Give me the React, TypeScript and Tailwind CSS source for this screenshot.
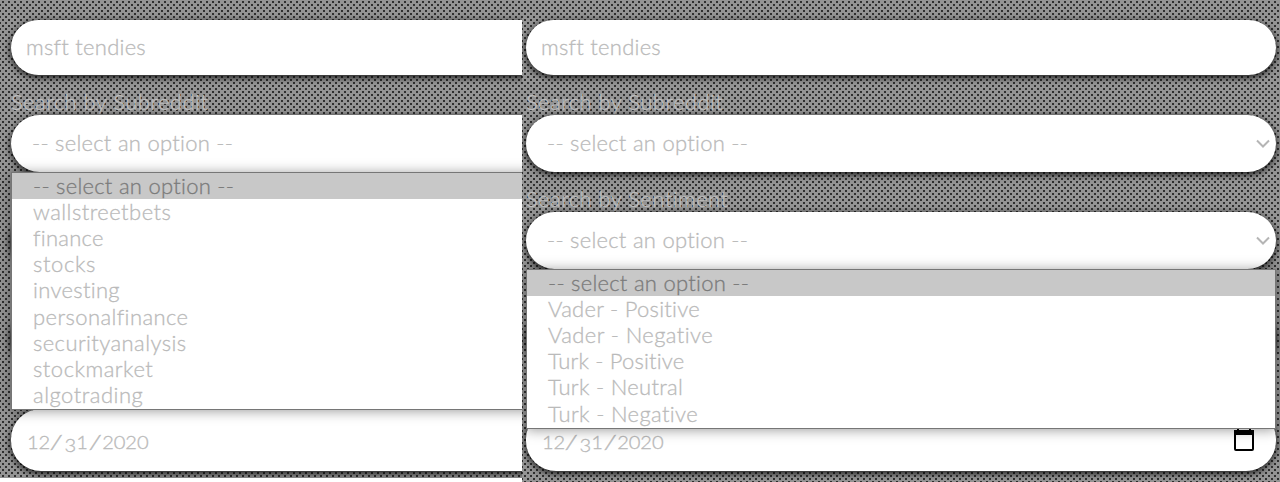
import React from "react";

type Option = { label: string; tracking: string };

const placeholder = "-- select an option --";

const subreddits: Option[] = [
  { label: "wallstreetbets", tracking: "tracking-[0.45px]" },
  { label: "finance", tracking: "tracking-[0.25px]" },
  { label: "stocks", tracking: "tracking-[0.6px]" },
  { label: "investing", tracking: "tracking-[0.3px]" },
  { label: "personalfinance", tracking: "tracking-[0.4px]" },
  { label: "securityanalysis", tracking: "tracking-[0.4px]" },
  { label: "stockmarket", tracking: "tracking-[0.5px]" },
  { label: "algotrading", tracking: "tracking-[0.5px]" },
];

const sentiments: Option[] = [
  { label: "Vader - Positive", tracking: "tracking-[0.27px]" },
  { label: "Vader - Negative", tracking: "tracking-[0.4px]" },
  { label: "Turk - Positive", tracking: "tracking-[0.17px]" },
  { label: "Turk - Neutral", tracking: "tracking-[0.3px]" },
  { label: "Turk - Negative", tracking: "tracking-[0.35px]" },
];

const field =
  "relative flex w-[750px] shrink-0 items-center rounded-[30px] bg-white text-[#bababa] shadow-[0_2px_6px_1px_rgba(0,0,0,0.75)]";

function Label({ text }: { text: string }) {
  return (
    <div className="h-10 shrink-0 pt-[13px] leading-7 tracking-[0.45px] text-[#bcbcbc]">{text}</div>
  );
}

function Select({ children }: { children?: React.ReactNode }) {
  return (
    <div className={`${field} h-[57px] pl-[21px]`}>
      <span className="pb-0.5 tracking-[0.26px]">{placeholder}</span>
      <svg className="absolute top-[24px] right-[6px]" width="14" height="10" fill="none" stroke="#b5b5b5" strokeWidth="2">
        <path d="M1 1.5 7 7.5 13 1.5" />
      </svg>
      {children}
    </div>
  );
}

function Menu({ options }: { options: Option[] }) {
  return (
    <div className="absolute top-[57px] left-0 z-10 w-[750px] border border-[#767676] bg-white pb-[0.6px] shadow-[0_1px_12px_rgba(0,0,0,0.4)]">
      <div className="flex h-[26.3px] items-center bg-[#c8c8c8] pb-px pl-[21px] tracking-[0.26px] text-[#7b7b7b]">
        {placeholder}
      </div>
      {options.map((o) => (
        <div key={o.label} className={`flex h-[26.2px] items-center pb-px pl-[21px] ${o.tracking}`}>
          {o.label}
        </div>
      ))}
    </div>
  );
}

function DateField() {
  return (
    <div className={`${field} h-[62px] pl-4`}>
      <span className="mt-1 inline-block origin-left scale-x-[1.15] text-[17.5px] tracking-[-0.1px]">
        12<span className="mx-[1px] inline-block scale-x-[1.35] text-[20px]">/</span>
        <span className="relative top-[3px] ml-0.5">3</span>1<span className="mx-[2px] inline-block scale-x-[1.35] text-[20px]">/</span>2020
      </span>
      <svg className="absolute top-[18px] right-[22px]" width="20" height="24" viewBox="0 0 20 24">
        <path d="M4 0v4M16 0v4" stroke="#000" strokeWidth="2" />
        <rect x="1" y="4" width="18" height="19" rx="1" fill="none" stroke="#000" strokeWidth="2" />
        <path d="M0 3h20v5H0z" />
      </svg>
    </div>
  );
}

function Form({ open }: { open: "subreddit" | "sentiment" }) {
  return (
    <>
      <div className={`${field} h-[55px] pl-[15px]`}>
        <span className="pb-0.5 tracking-[0.25px]">msft tendies</span>
      </div>
      <Label text="Search by Subreddit" />
      <Select>{open === "subreddit" && <Menu options={subreddits} />}</Select>
      {open === "sentiment" ? <Label text="Search by Sentiment" /> : <div className="h-10 shrink-0" />}
      {open === "sentiment" ? (
        <Select>
          <Menu options={sentiments} />
        </Select>
      ) : (
        <div className={`${field} h-[57px]`} />
      )}
      <div className="h-10 shrink-0" />
      <div className={`${field} h-[57px]`} />
      <div className="h-[43px] shrink-0" />
      <DateField />
    </>
  );
}

const dots =
  "bg-[#949494] bg-[radial-gradient(circle_at_center,#303030_0.75px,#30303000_1.45px),radial-gradient(circle_at_center,#303030_0.75px,#30303000_1.45px)] bg-size-[6px_6px] bg-position-[0px_-1px,3px_2px]";

export default function App() {
  return (
    <main className="flex h-[482px] w-[1280px] overflow-hidden bg-white text-[22px] leading-[26px] font-light font-[Lato,sans-serif] whitespace-nowrap [-webkit-text-stroke:0.3px]">
      <section className={`flex h-[478px] w-[522px] shrink-0 flex-col overflow-hidden pt-5 pl-[11px] ${dots}`}>
        <Form open="subreddit" />
      </section>
      <section className={`flex h-[482px] w-[758px] shrink-0 flex-col overflow-hidden pt-5 pl-1 ${dots}`}>
        <Form open="sentiment" />
      </section>
    </main>
  );
}
